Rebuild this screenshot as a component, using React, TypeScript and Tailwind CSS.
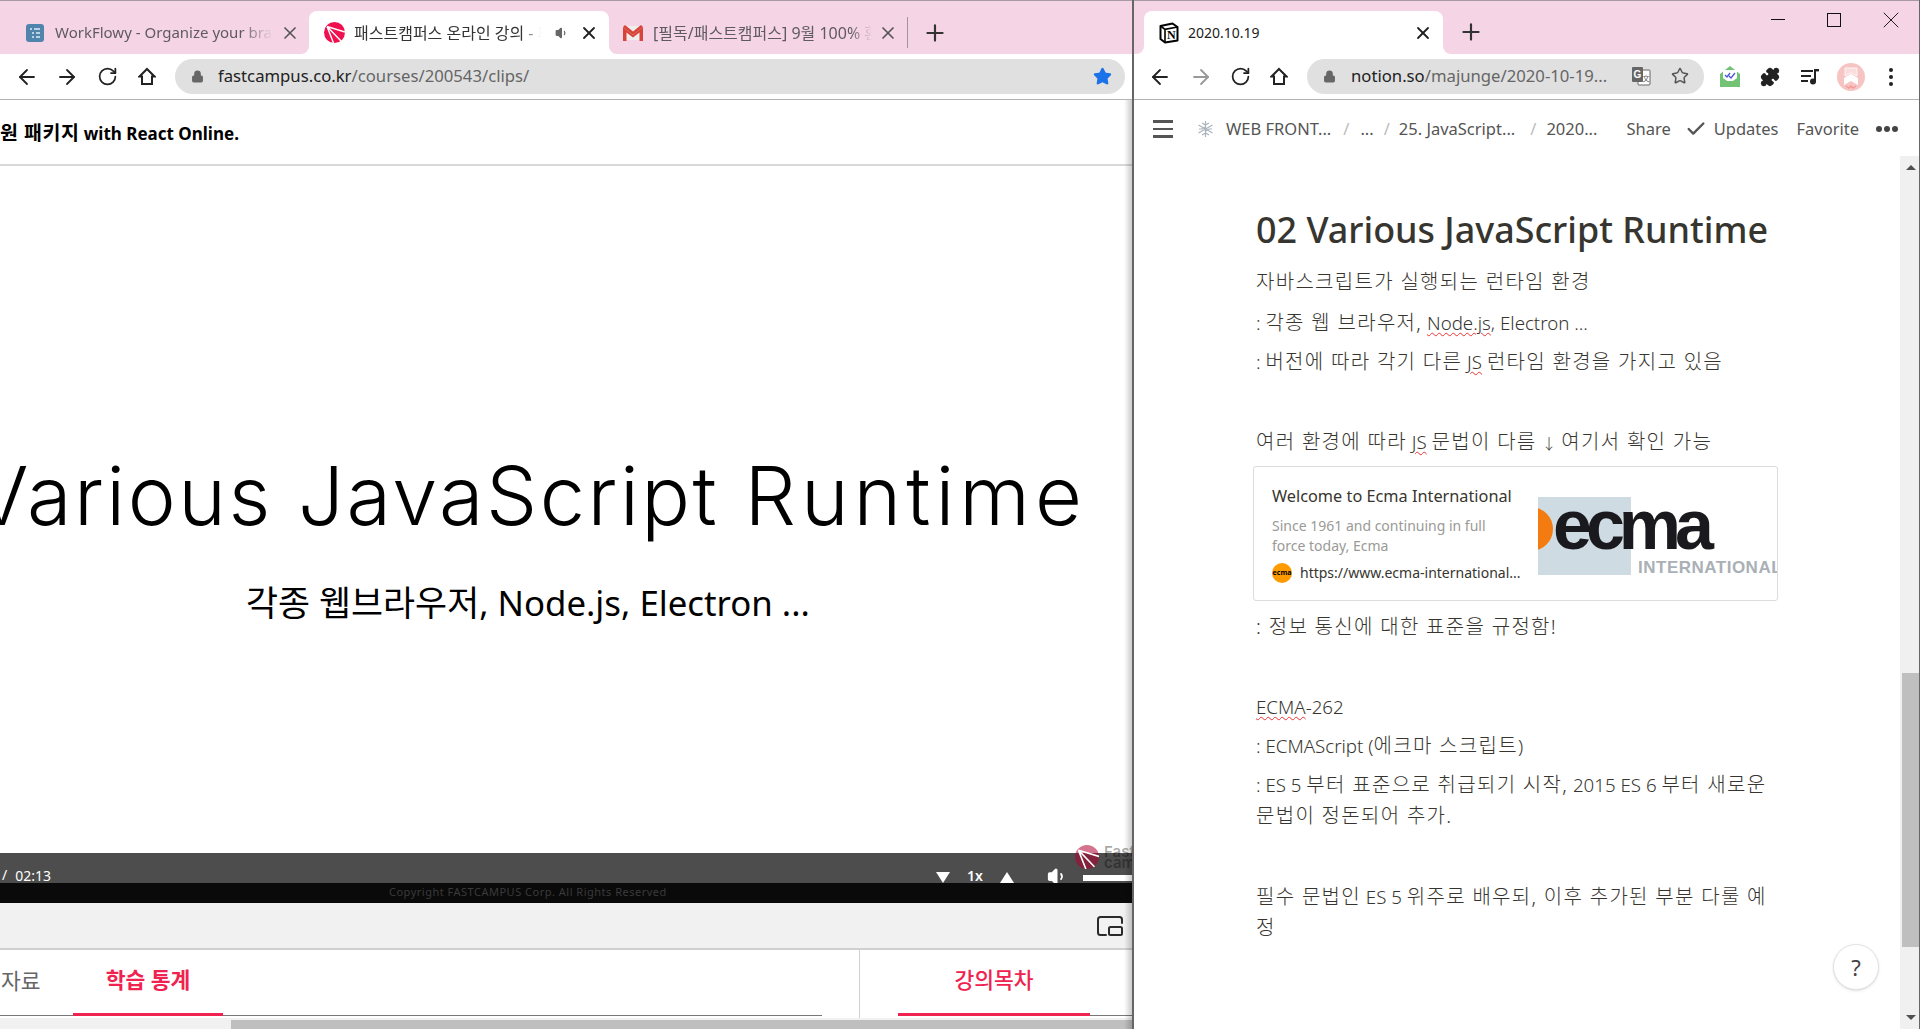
import React from 'react';
import { ArrowLeft, ArrowRight, RotateCw, Lock, Star, Puzzle, X, Plus, Volume1, Check } from 'lucide-react';

const sans = "font-['Noto_Sans','Noto_Sans_CJK_KR',sans-serif]";

function HomeIcon() {
  return (
    <svg width="18" height="19" viewBox="0 0 18 19" fill="none" stroke="#222" strokeWidth="2">
      <path d="M9 2 L16.5 9.5 H14 V17 H4 V9.5 H1.5 Z" strokeLinejoin="miter" />
    </svg>
  );
}

function WorkflowyIcon() {
  return (
    <svg width="18" height="18" viewBox="0 0 18 18" className="shrink-0">
      <rect width="18" height="18" rx="3" fill="#4f85ad" />
      <path d="M4 5h2M8 5h6M6 9h2M10 9h4M6 13h2M10 13h4" stroke="#dfe9f1" strokeWidth="1.6" />
    </svg>
  );
}

function FastcampusIcon({ size = 21, color = '#f0104f' }: { size?: number; color?: string }) {
  return (
    <svg width={size} height={size} viewBox="0 0 21 21" className="shrink-0">
      <circle cx="10.5" cy="10.5" r="10.5" fill={color} />
      <path d="M3 4.5 L21 10 M3 4.5 L17 19 M3 4.5 L9.5 21" stroke="#fff" strokeWidth="1.4" />
    </svg>
  );
}

function GmailIcon() {
  return (
    <svg width="20" height="16" viewBox="0 0 20 16" className="shrink-0">
      <rect x="1" y="1" width="18" height="14" fill="#eee" />
      <path d="M0 16V2l10 8 10-8v14h-3.5V7.5L10 12.5 3.5 7.5V16Z" fill="#d8443a" />
      <path d="M0 2 L2 0 L10 6.5 L18 0 L20 2 L10 10Z" fill="#d8443a" />
    </svg>
  );
}

function NotionIcon() {
  return (
    <svg width="20" height="22" viewBox="0 0 20 22" className="shrink-0">
      <path d="M1.5 4 L13.5 1.5 L18.5 5 V18.5 L6 20.5 L1.5 17 Z" fill="#fff" stroke="#000" strokeWidth="2" strokeLinejoin="round" />
      <path d="M1.5 4 L6 7.3 L18.5 5 M6 7.3 V20.5" fill="none" stroke="#000" strokeWidth="1.6" />
      <text x="12.3" y="17" textAnchor="middle" fontSize="12" fontWeight="700" fontFamily="Liberation Serif" fill="#000">N</text>
    </svg>
  );
}

function TranslateIcon() {
  return (
    <svg width="20" height="20" viewBox="0 0 20 20" className="shrink-0">
      <rect x="7" y="4" width="12" height="15" rx="1" fill="#fff" stroke="#666" />
      <rect x="1" y="1" width="11" height="15" rx="1" fill="#666" />
      <text x="6.5" y="12" textAnchor="middle" fontSize="10" fontWeight="700" fontFamily="Liberation Sans" fill="#fff">G</text>
      <text x="15" y="15" textAnchor="middle" fontSize="7" fontFamily="Noto Sans CJK JP" fill="#666">文</text>
    </svg>
  );
}

function MailExtIcon() {
  return (
    <svg width="22" height="24" viewBox="0 0 22 24">
      <path d="M1 9 L11 1 L21 9 V22 H1 Z" fill="#72c374" />
      <rect x="4" y="5" width="14" height="11" fill="#fff" />
      <path d="M6 10l2 2 3-4M10 11l2 2 4-5" stroke="#4a55d6" strokeWidth="1.3" fill="none" />
      <path d="M1 11 L11 18 L21 11 V22 H1 Z" fill="#72c374" />
    </svg>
  );
}

function PlaylistIcon() {
  return (
    <svg width="20" height="18" viewBox="0 0 20 18" fill="#222">
      <rect x="1" y="2" width="12" height="2" />
      <rect x="1" y="7" width="10" height="2" />
      <rect x="1" y="12" width="7" height="2" />
      <rect x="14" y="2" width="2" height="11" />
      <rect x="14" y="1" width="5" height="2.4" />
      <circle cx="13" cy="13.5" r="3" />
    </svg>
  );
}

function AvatarIcon() {
  return (
    <svg width="28" height="28" viewBox="0 0 28 28">
      <circle cx="14" cy="14" r="14" fill="#f7c4c4" />
      <path d="M8 5 L20 5 V13 L14 10 L8 13 Z" fill="#f9dcdc" stroke="#fff" strokeWidth="0.8" />
      <path d="M7 22 V15 L14 11 L21 15 V22 L14 18 Z" fill="#fff" />
      <path d="M9 23 L12 25 L14 23 L16 25 L19 23" stroke="#f29a9a" strokeWidth="1.4" fill="none" />
    </svg>
  );
}

function SnowflakeIcon() {
  return (
    <svg width="17" height="18" viewBox="0 0 17 18" stroke="#a9b4bd" strokeWidth="1.2" fill="none">
      <path d="M8.5 1v16M1.5 5l14 8M15.5 5l-14 8" />
      <path d="M5 3l3.5 2 3.5-2M5 15l3.5-2 3.5 2M2 9h3l3.5-2M15 9h-3l-3.5 2" />
    </svg>
  );
}

function PipIcon() {
  return (
    <svg width="26" height="20" viewBox="0 0 26 20" fill="none" stroke="#2a2a2a" strokeWidth="2" strokeLinecap="round">
      <path d="M9 19 H3.5 Q1 19 1 16.5 V3.5 Q1 1 3.5 1 H22.5 Q25 1 25 3.5 V7" />
      <rect x="12" y="11" width="13" height="8" rx="1.5" />
    </svg>
  );
}

function Corner({ side }: { side: 'left' | 'right' }) {
  return (
    <div className={side === 'left' ? 'absolute bottom-0 -left-2 w-2 h-2 bg-white' : 'absolute bottom-0 -right-2 w-2 h-2 bg-white'}>
      <div className={side === 'left' ? 'w-2 h-2 bg-[#f5d5e5] rounded-br-lg' : 'w-2 h-2 bg-[#f5d5e5] rounded-bl-lg'} />
    </div>
  );
}

function Squiggle({ children }: { children: React.ReactNode }) {
  return <span className="underline decoration-wavy decoration-[#e33] decoration-1 underline-offset-2">{children}</span>;
}

// Korean runs are set wider than the latin ones in the page body
function K({ children }: { children: React.ReactNode }) {
  return <span className="text-[20px] tracking-[1.3px]">{children}</span>;
}

function LeftWindow() {
  return (
    <div className="w-[1132px] h-full shrink-0 flex flex-col overflow-hidden relative">
      {/* tabs */}
      <div className="h-[54px] shrink-0 bg-[#f5d5e5] border-t border-[#a89aa2] flex items-end">
        <div className="w-[309px] h-[43px] flex items-center pl-[26px] shrink-0">
          <WorkflowyIcon />
          <span className="ml-[11px] w-[218px] shrink-0 overflow-hidden whitespace-nowrap text-[15px] text-[#5f5a62] [mask-image:linear-gradient(to_right,black_85%,transparent)]">WorkFlowy - Organize your brain.</span>
          <X size={20} strokeWidth={2} className="ml-[7px] shrink-0 text-[#555]" />
        </div>
        <div className="relative w-[300px] h-[43px] bg-white rounded-t-lg flex items-center pl-[15px] shrink-0">
          <Corner side="left" />
          <Corner side="right" />
          <FastcampusIcon />
          <span className="ml-[9px] w-[187px] shrink-0 overflow-hidden whitespace-nowrap text-[16px] text-[#333] [mask-image:linear-gradient(to_right,black_90%,transparent)]">패스트캠퍼스 온라인 강의 - 패스트캠퍼스</span>
          <Volume1 size={14} fill="#666" className="ml-[14px] shrink-0 text-[#666]" />
          <X size={20} strokeWidth={2.2} className="ml-[10px] shrink-0 text-[#222]" />
        </div>
        <div className="w-[340px] h-[43px] flex items-center pl-[14px] shrink-0">
          <GmailIcon />
          <span className="ml-[10px] w-[219px] shrink-0 overflow-hidden whitespace-nowrap text-[16px] text-[#5f5a62] [mask-image:linear-gradient(to_right,black_90%,transparent)]">[필독/패스트캠퍼스] 9월 100% 환급 챌린지</span>
          <X size={20} strokeWidth={2} className="ml-[6px] shrink-0 text-[#555]" />
          <div className="ml-[9px] w-px h-[31px] shrink-0 bg-[#a3939b]" />
          <Plus size={26} strokeWidth={2} className="ml-[14px] shrink-0 text-[#333]" />
        </div>
      </div>
      {/* address bar */}
      <div className="h-[46px] shrink-0 bg-white border-b border-[#b4b4b4] flex items-center pl-[15px] pr-[7px]">
        <ArrowLeft size={24} strokeWidth={1.8} className="shrink-0 text-[#222]" />
        <ArrowRight size={24} strokeWidth={1.8} className="ml-[16px] shrink-0 text-[#222]" />
        <RotateCw size={21} strokeWidth={2} className="ml-[18px] shrink-0 text-[#222]" />
        <div className="ml-[20px]"><HomeIcon /></div>
        <div className="ml-[19px] flex-1 h-[35px] bg-[#e0e0e0] rounded-full flex items-center pl-[16px] pr-[13px] mb-px">
          <Lock size={13} fill="#666" className="text-[#666]" />
          <span className="ml-[14px] text-[16.7px] text-[#666] flex-1 whitespace-nowrap"><span className="text-[#222]">fastcampus.co.kr</span>/courses/200543/clips/</span>
          <Star size={19} fill="#1a73e8" className="text-[#1a73e8]" />
        </div>
      </div>
      {/* course header */}
      <div className="h-[66px] shrink-0 bg-white border-b-2 border-[#d8d8d8] flex items-center overflow-hidden pt-[2px]">
        <span className="text-[17px] font-bold text-black whitespace-nowrap"><span className="text-[19.5px] tracking-[0.5px]">원 패키지</span> with React Online.</span>
      </div>
      {/* video */}
      <div className="flex-1 bg-white overflow-hidden whitespace-nowrap">
        <div className="mt-[280px] -ml-[26px] text-[81px] leading-[100px] font-light tracking-[2.5px] text-black font-['Inter',sans-serif]">Various JavaScript <span className="tracking-[5px]">Runtime</span></div>
        <div className="mt-[35px] ml-[246px] text-[34.8px] leading-[44px] text-black">각종 웹브라우저, Node.js, Electron ...</div>
      </div>
      {/* player controls */}
      <div className="h-[30px] shrink-0 bg-[#4d4d4d] flex items-end text-white">
        <span className="ml-[2px] text-[14px] leading-[17px]">/</span>
        <span className="ml-[8px] text-[14px] leading-[15px]">02:13</span>
        <div className="ml-[885px] w-0 h-0 shrink-0 border-x-[7px] border-x-transparent border-t-[11px] border-t-white" />
        <span className="ml-[17px] text-[14px] leading-[15px] font-semibold">1x</span>
        <div className="ml-[17px] w-0 h-0 shrink-0 border-x-[7px] border-x-transparent border-b-[11px] border-b-white" />
        <Volume1 size={21} fill="#fff" className="ml-[33px] -mb-[4px] shrink-0 text-white" />
        <div className="ml-[15px] flex-1 h-[6px] bg-white mb-[2px]" />
      </div>
      <div className="absolute top-[845px] left-[1075px] flex items-center">
        <FastcampusIcon size={24} color="rgba(176,0,48,0.55)" />
        <span className="ml-[5px] text-[15px] leading-[11px] text-black/35 font-semibold whitespace-pre font-['Inter',sans-serif]">{'Fast\ncam'}</span>
      </div>
      <div className="h-[20px] shrink-0 bg-[#0a0a0a] flex items-center pl-[389px] pb-[1px]">
        <span className="text-[11px] text-[#3a3a3a] tracking-[0.5px]">Copyright FASTCAMPUS Corp. All Rights Reserved</span>
      </div>
      <div className="h-[47px] shrink-0 bg-[#f1f1f1] border-b-2 border-[#d0d0d0] flex items-center justify-end pr-[9px]">
        <PipIcon />
      </div>
      {/* lower tabs */}
      <div className="h-[68px] shrink-0 bg-white flex">
        <div className="w-[859px] shrink-0 pr-[37px]">
          <div className="h-[66px] border-b border-[#777] flex">
            <div className="w-[73px] shrink-0 overflow-hidden pt-[15px]">
              <span className="ml-[1px] block text-[21.5px] text-[#666] whitespace-nowrap">자료</span>
            </div>
            <div className="w-[150px] h-[66px] border-b-[3px] border-[#f0224f] text-center pt-[14px] text-[21.5px] font-bold text-[#f0224f]">학습 통계</div>
          </div>
        </div>
        <div className="flex-1 border-l border-[#d0d0d0] pl-[38px]">
          <div className="h-[66px] border-b border-[#777] flex">
            <div className="w-[192px] h-[66px] text-center pt-[14px] text-[21.5px] font-medium text-[#f0224f] border-b-[3px] border-[#f0224f]">강의목차</div>
          </div>
        </div>
      </div>
      {/* horizontal scrollbar */}
      <div className="h-[11px] shrink-0 bg-[#f1f1f1] pl-[231px] pt-[2px]">
        <div className="w-full h-full bg-[#bfbfbf]" />
      </div>
      <div className="absolute top-[100px] bottom-0 right-0 w-[8px] bg-gradient-to-r from-transparent to-black/20" />
    </div>
  );
}

function RightWindow() {
  return (
    <div className="flex-1 min-w-0 h-full flex flex-col border-l-2 border-r border-[#666] overflow-hidden">
      <div className="h-[54px] shrink-0 bg-[#f5d5e5] border-t border-[#a89aa2] flex items-end pl-[10px]">
        <div className="relative w-[299px] h-[43px] bg-white rounded-t-lg flex items-center pl-[15px] shrink-0">
          <Corner side="left" />
          <Corner side="right" />
          <NotionIcon />
          <span className="ml-[9px] flex-1 text-[14px] text-[#222]">2020.10.19</span>
          <X size={20} strokeWidth={2.2} className="mr-[10px] text-[#222]" />
        </div>
        <Plus size={26} strokeWidth={2} className="ml-[15px] mb-[9px] text-[#333]" />
        <div className="flex-1 self-start flex justify-end items-center h-[37px] pr-[14px] text-[#222]">
          <div className="w-[14px] h-px bg-[#111]" />
          <div className="ml-[42px] w-[14px] h-[14px] border border-[#111]" />
          <X size={28} strokeWidth={0.8} className="ml-[36px] text-[#111]" />
        </div>
      </div>
      <div className="h-[46px] shrink-0 bg-white border-b border-[#b4b4b4] flex items-center pl-[14px]">
        <ArrowLeft size={24} strokeWidth={1.8} className="shrink-0 text-[#222]" />
        <ArrowRight size={24} strokeWidth={1.8} className="ml-[17px] shrink-0 text-[#999]" />
        <RotateCw size={21} strokeWidth={2} className="ml-[17px] shrink-0 text-[#222]" />
        <div className="ml-[19px]"><HomeIcon /></div>
        <div className="ml-[19px] w-[397px] shrink-0 h-[35px] bg-[#e0e0e0] rounded-full flex items-center pl-[16px] pr-[15px] mb-px">
          <Lock size={13} fill="#666" className="shrink-0 text-[#666]" />
          <span className="ml-[15px] flex-1 text-[16.7px] text-[#666] whitespace-nowrap"><span className="text-[#222]">notion.so</span>/majunge/2020-10-19...</span>
          <TranslateIcon />
          <Star size={18} strokeWidth={2} className="ml-[20px] shrink-0 text-[#555]" />
        </div>
        <div className="ml-[15px]"><MailExtIcon /></div>
        <Puzzle size={20} fill="#222" className="ml-[19px] shrink-0 text-[#222]" />
        <div className="ml-[20px]"><PlaylistIcon /></div>
        <div className="ml-[17px]"><AvatarIcon /></div>
        <div className="ml-[24px] flex flex-col gap-[3px]">
          <div className="w-[4px] h-[4px] rounded-full bg-[#222]" />
          <div className="w-[4px] h-[4px] rounded-full bg-[#222]" />
          <div className="w-[4px] h-[4px] rounded-full bg-[#222]" />
        </div>
      </div>
      {/* notion top bar */}
      <div className="h-[56px] shrink-0 bg-white flex items-center pl-[19px] pt-[2px] text-[16.5px] text-[#555] whitespace-nowrap">
        <div className="w-[20px] flex flex-col gap-[5px]">
          <div className="h-[2.5px] bg-[#555]" />
          <div className="h-[2.5px] bg-[#555]" />
          <div className="h-[2.5px] bg-[#555]" />
        </div>
        <div className="ml-[24px]"><SnowflakeIcon /></div>
        <span className="ml-[12px]">WEB FRONT...</span>
        <span className="ml-[12px] text-[#bbb]">/</span>
        <span className="ml-[11px]">...</span>
        <span className="ml-[10px] text-[#bbb]">/</span>
        <span className="ml-[9px]">25. JavaScript...</span>
        <span className="ml-[15px] text-[#bbb]">/</span>
        <span className="ml-[10px]">2020...</span>
        <span className="ml-[29px]">Share</span>
        <Check size={22} strokeWidth={2.6} className="ml-[14px] text-[#555]" />
        <span className="ml-[7px]">Updates</span>
        <span className="ml-[18px]">Favorite</span>
        <div className="ml-[17px] flex gap-[2px]">
          <div className="w-[6px] h-[6px] rounded-full bg-[#444]" />
          <div className="w-[6px] h-[6px] rounded-full bg-[#444]" />
          <div className="w-[6px] h-[6px] rounded-full bg-[#444]" />
        </div>
      </div>
      {/* page */}
      <div className="flex-1 min-h-0 flex bg-white relative">
        <div className="flex-1 min-w-0 pl-[122px] pr-[122px] pt-[49px] text-[18.7px] leading-[31px] font-light text-[#37352f]">
          <h1 className="text-[35.9px] leading-[50px] font-medium mb-[11px] whitespace-nowrap">02 Various JavaScript Runtime</h1>
          <p><K>자바스크립트가 실행되는 런타임 환경</K></p>
          <p className="mt-[10px]">: <K>각종 웹 브라우저,</K> <Squiggle>Node.js</Squiggle>, Electron ...</p>
          <p className="mt-[8px]">: <K>버전에 따라 각기 다른</K> <Squiggle>JS</Squiggle> <K>런타임 환경을 가지고 있음</K></p>
          <p className="mt-[49px]"><K>여러 환경에 따라</K> <Squiggle>JS</Squiggle> <K>문법이 다름</K> <span className="text-[15px]">↓</span> <K>여기서 확인 가능</K></p>
          <div className="-ml-[3px] mt-[7px] w-[525px] h-[135px] border border-[#dcdcdc] rounded-[3px] flex overflow-hidden font-normal">
            <div className="w-[284px] shrink-0 pl-[18px] pt-[16px]">
              <div className="text-[16.3px] leading-[26px] whitespace-nowrap">Welcome to Ecma International</div>
              <div className="mt-[7px] text-[14px] leading-[20px] text-[#9a9a96]">Since 1961 and continuing in full<br />force today, Ecma</div>
              <div className="mt-[7px] flex items-center text-[14px] leading-[20px] whitespace-nowrap">
                <div className="w-[20px] h-[20px] rounded-full bg-[#ff9b00] flex items-center justify-center text-[7px] font-bold text-black">ecma</div>
                <span className="ml-[8px]">https://www.ecma-international...</span>
              </div>
            </div>
            <div className="relative flex-1 mt-[30px] h-[78px] overflow-hidden">
              <div className="w-[93px] h-full bg-[#cfdbe3]" />
              <div className="absolute -left-[29px] top-[10px] w-[44px] h-[44px] rounded-full bg-[#f47b10]" />
              <div className="absolute left-[15px] -top-[5px] text-[70px] leading-[66px] font-bold text-[#1a1a1e] font-['Liberation_Sans',sans-serif] tracking-[-6px]">ecma</div>
              <div className="absolute left-[100px] top-[62px] text-[17px] leading-[17px] font-bold text-[#a9b0b6] whitespace-nowrap font-['Liberation_Sans',sans-serif] tracking-[0.5px]">INTERNATIONAL</div>
            </div>
          </div>
          <p className="mt-[10px]"><K>: 정보 통신에 대한 표준을 규정함!</K></p>
          <p className="mt-[49px]"><Squiggle>ECMA</Squiggle>-262</p>
          <p className="mt-[8px]">: ECMAScript (<K>에크마 스크립트</K>)</p>
          <p className="mt-[8px]">: ES 5 <K>부터 표준으로 취급되기 시작,</K> 2015 ES 6 <K>부터 새로운 문법이 정돈되어 추가.</K></p>
          <p className="mt-[50px]"><K>필수 문법인</K> ES 5 <K>위주로 배우되, 이후 추가된 부분 다룰 예정</K></p>
        </div>
        <div className="absolute right-[40px] bottom-[39px] w-[46px] h-[46px] rounded-full bg-white border border-[#e2e2e2] shadow-sm flex items-center justify-center text-[22px] text-[#444]">?</div>
        {/* scrollbar */}
        <div className="w-[19px] shrink-0 bg-[#f0f0f0] flex flex-col items-center pt-[9px] pl-[2px]">
          <div className="w-0 h-0 border-x-[5px] border-x-transparent border-b-[5px] border-b-[#505050]" />
          <div className="mt-[503px] w-full h-[274px] bg-[#bfbfbf]" />
          <div className="mt-[68px] w-0 h-0 border-x-[5px] border-x-transparent border-t-[5px] border-t-[#505050]" />
        </div>
      </div>
    </div>
  );
}

export default function App() {
  return (
    <div className={`w-[1920px] h-[1029px] flex overflow-hidden bg-white ${sans}`}>
      <LeftWindow />
      <RightWindow />
    </div>
  );
}
